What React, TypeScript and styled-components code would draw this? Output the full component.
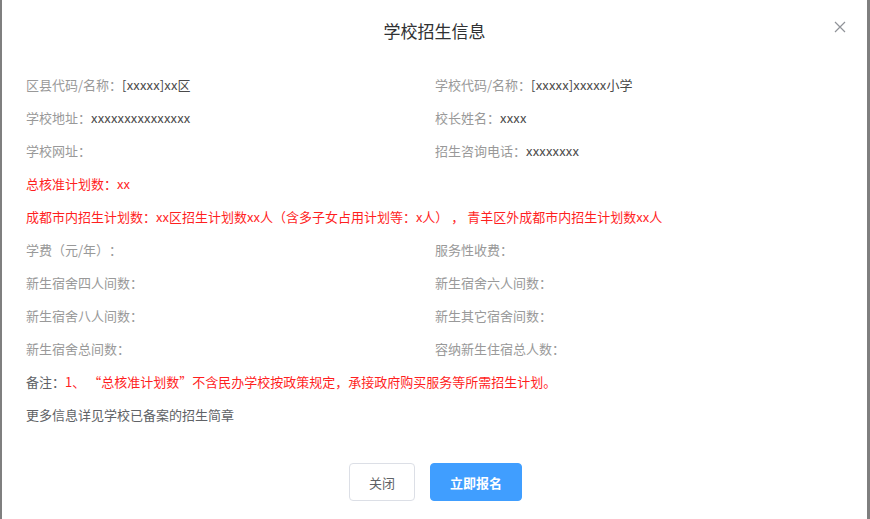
import styled, { createGlobalStyle } from 'styled-components'

const Global = createGlobalStyle`
  html, body {
    margin: 0;
    padding: 0;
    background: #7f7f7f;
    font-family: "Noto Sans CJK SC", "Noto Sans", "Liberation Sans", sans-serif;
    text-spacing-trim: space-all;
  }
`

const Dialog = styled.div`
  position: relative;
  margin-left: 2px;
  width: 865px;
  height: 519px;
  background: #fff;
  box-sizing: border-box;
`

const Header = styled.div`
  height: 60px;
  display: flex;
  align-items: center;
  justify-content: center;
  font-size: 17px;
  color: #303133;
`

const Close = styled.button`
  position: absolute;
  top: 20px;
  right: 20px;
  width: 14px;
  height: 14px;
  padding: 0;
  border: 0;
  background: none;
  cursor: pointer;
  display: flex;
  align-items: center;
  justify-content: center;
`

const Body = styled.div`
  padding: 8px 22px 0 24px;
  font-size: 13px;
`

const Grid = styled.div`
  display: grid;
  grid-template-columns: 409px 1fr;
`

const Row = styled.div<{ $full?: boolean; $red?: boolean }>`
  height: 33px;
  line-height: 33px;
  white-space: pre;
  grid-column: ${p => (p.$full ? '1 / -1' : 'auto')};
  color: ${p => (p.$red ? '#ff1f1f' : '#999')};
`

const Value = styled.span`
  color: #4a4a4a;
  letter-spacing: 0.15px;
`

const Note = styled.span`
  color: #606266;
`

const Red = styled.span`
  color: #ff1f1f;
`

const Quote = styled.span`
  font-feature-settings: "fwid";
`

const Footer = styled.div`
  display: flex;
  justify-content: center;
  gap: 15px;
  padding-top: 32px;
`

const Button = styled.button<{ $primary?: boolean }>`
  height: 38px;
  padding: 0 19px;
  border-radius: 4px;
  font-family: inherit;
  font-size: 13px;
  font-weight: ${p => (p.$primary ? 600 : 400)};
  border: 1px solid ${p => (p.$primary ? '#409eff' : '#dcdfe6')};
  background: ${p => (p.$primary ? '#409eff' : '#fff')};
  color: ${p => (p.$primary ? '#fff' : '#606266')};
  cursor: pointer;
`

const pairs: [string, string][] = [
  ['区县代码/名称：', '[xxxxx]xx区'],
  ['学校代码/名称：', '[xxxxx]xxxxx小学'],
  ['学校地址：', 'xxxxxxxxxxxxxxx'],
  ['校长姓名：', 'xxxx'],
  ['学校网址：', ''],
  ['招生咨询电话：', 'xxxxxxxx'],
]

const fees = [
  '学费（元/年）：',
  '服务性收费：',
  '新生宿舍四人间数：',
  '新生宿舍六人间数：',
  '新生宿舍八人间数：',
  '新生其它宿舍间数：',
  '新生宿舍总间数：',
  '容纳新生住宿总人数：',
]

export default function App() {
  return (
    <>
      <Global />
      <Dialog>
        <Header>学校招生信息</Header>
        <Close aria-label="close">
          <svg width="12" height="12" viewBox="0 0 12 12">
            <path d="M1 1L11 11M11 1L1 11" stroke="#909399" strokeWidth="1.2" />
          </svg>
        </Close>
        <Body>
          <Grid>
            {pairs.map(([label, value]) => (
              <Row key={label}>
                {label}
                <Value>{value}</Value>
              </Row>
            ))}
            <Row $full $red>总核准计划数：xx</Row>
            <Row $full $red>
              {'成都市内招生计划数：xx区招生计划数xx人（含多子女占用计划等：x人） ， 青羊区外成都市内招生计划数xx人'}
            </Row>
            {fees.map(label => (
              <Row key={label}>{label}</Row>
            ))}
            <Row $full>
              <Note>备注：</Note>
              <Red>
                {'1、 '}<Quote>“</Quote>总核准计划数<Quote>”</Quote>不含民办学校按政策规定，承接政府购买服务等所需招生计划。
              </Red>
            </Row>
            <Row $full>
              <Note>更多信息详见学校已备案的招生简章</Note>
            </Row>
          </Grid>
          <Footer>
            <Button>关闭</Button>
            <Button $primary>立即报名</Button>
          </Footer>
        </Body>
      </Dialog>
    </>
  )
}
